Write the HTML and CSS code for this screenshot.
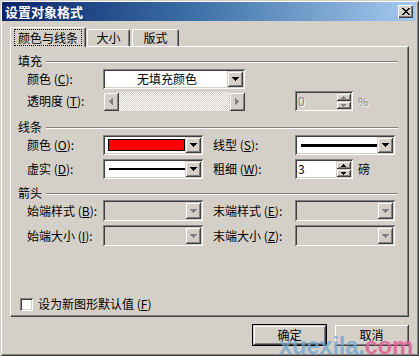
FILE: index.html
```html
<!DOCTYPE html>
<html lang="zh-CN">
<head>
<meta charset="utf-8">
<title>设置对象格式</title>
<link rel="stylesheet" href="styles.css">
</head>
<body>
<div class="window">
  <div class="titlebar">
    <span class="title">设置对象格式</span>
    <span class="close"><svg width="8" height="7" viewBox="0 0 8 7"><path d="M0 0h2v1h1v1h2V1h1V0h2v1H7v1H6v1H5v1h1v1h1v1h1v1H6V6H5V5H3v1H2v1H0V6h1V5h1V4h1V3H2V2H1V1H0z" fill="#000"/></svg></span>
  </div>

  <div class="tabs">
    <div class="tab active"><span class="focus">颜色与线条</span></div>
    <div class="tab t2">大小</div>
    <div class="tab t3">版式</div>
  </div>

  <div class="panel">
    <div class="group">
      <div class="ghead"><span>填充</span><i class="etch"></i></div>
      <div class="rows rows-fill">
        <div class="row">
          <span class="lbl">颜色 (<u>C</u>):</span>
          <div class="combo wide sunken">
            <div class="field center">无填充颜色</div>
            <div class="ddbtn raised"><svg width="7" height="4" viewBox="0 0 7 4"><path d="M0 0h7v1H6v1H5v1H4v1H3V3H2V2H1V1H0z" fill="#000"/></svg></div>
          </div>
        </div>
        <div class="row">
          <span class="lbl">透明度 (<u>T</u>):</span>
          <div class="scroll wide">
            <div class="sbtn raised"><svg width="4" height="7" viewBox="0 0 4 7"><path d="M3 0h1v7H3V6H2V5H1V4H0V3h1V2h1V1h1z" fill="#808080"/></svg></div>
            <div class="track"></div>
            <div class="sbtn raised"><svg width="4" height="7" viewBox="0 0 4 7"><path d="M0 0h1v1h1v1h1v1h1v1H3v1H2v1H1v1H0z" fill="#808080"/></svg></div>
          </div>
          <div class="spin sunken disabled">
            <div class="field">0</div>
            <div class="spinbtns">
              <div class="sp raised"><svg width="5" height="3" viewBox="0 0 5 3"><path d="M2 0h1v1h1v1h1v1H0V2h1V1h1z" fill="#808080"/></svg></div>
              <div class="sp raised"><svg width="5" height="3" viewBox="0 0 5 3"><path d="M0 0h5v1H4v1H3v1H2V2H1V1H0z" fill="#808080"/></svg></div>
            </div>
          </div>
          <span class="unit gray">%</span>
        </div>
      </div>
    </div>

    <div class="group g-line">
      <div class="ghead"><span>线条</span><i class="etch"></i></div>
      <div class="rows rows-line">
        <div class="row">
          <span class="lbl">颜色 (<u>O</u>):</span>
          <div class="combo narrow sunken">
            <div class="field"><i class="swatch"></i></div>
            <div class="ddbtn raised"><svg width="7" height="4" viewBox="0 0 7 4"><path d="M0 0h7v1H6v1H5v1H4v1H3V3H2V2H1V1H0z" fill="#000"/></svg></div>
          </div>
          <span class="lbl2">线型 (<u>S</u>):</span>
          <div class="combo narrow sunken">
            <div class="field"><i class="stroke thick"></i></div>
            <div class="ddbtn raised"><svg width="7" height="4" viewBox="0 0 7 4"><path d="M0 0h7v1H6v1H5v1H4v1H3V3H2V2H1V1H0z" fill="#000"/></svg></div>
          </div>
        </div>
        <div class="row">
          <span class="lbl">虚实 (<u>D</u>):</span>
          <div class="combo narrow sunken">
            <div class="field"><i class="stroke"></i></div>
            <div class="ddbtn raised"><svg width="7" height="4" viewBox="0 0 7 4"><path d="M0 0h7v1H6v1H5v1H4v1H3V3H2V2H1V1H0z" fill="#000"/></svg></div>
          </div>
          <span class="lbl2">粗细 (<u>W</u>):</span>
          <div class="spin sunken">
            <div class="field">3</div>
            <div class="spinbtns">
              <div class="sp raised"><svg width="5" height="3" viewBox="0 0 5 3"><path d="M2 0h1v1h1v1h1v1H0V2h1V1h1z" fill="#000"/></svg></div>
              <div class="sp raised"><svg width="5" height="3" viewBox="0 0 5 3"><path d="M0 0h5v1H4v1H3v1H2V2H1V1H0z" fill="#000"/></svg></div>
            </div>
          </div>
          <span class="unit">磅</span>
        </div>
      </div>
    </div>

    <div class="group g-arrow">
      <div class="ghead"><span>箭头</span><i class="etch"></i></div>
      <div class="rows rows-arrow">
        <div class="row tall">
          <span class="lbl">始端样式 (<u>B</u>):</span>
          <div class="combo narrow sunken off">
            <div class="field"></div>
            <div class="ddbtn raised"><svg width="7" height="4" viewBox="0 0 7 4"><path d="M0 0h7v1H6v1H5v1H4v1H3V3H2V2H1V1H0z" fill="#808080"/></svg></div>
          </div>
          <span class="lbl2">末端样式 (<u>E</u>):</span>
          <div class="combo narrow sunken off">
            <div class="field"></div>
            <div class="ddbtn raised"><svg width="7" height="4" viewBox="0 0 7 4"><path d="M0 0h7v1H6v1H5v1H4v1H3V3H2V2H1V1H0z" fill="#808080"/></svg></div>
          </div>
        </div>
        <div class="row tall">
          <span class="lbl">始端大小 (<u>I</u>):</span>
          <div class="combo narrow sunken off">
            <div class="field"></div>
            <div class="ddbtn raised"><svg width="7" height="4" viewBox="0 0 7 4"><path d="M0 0h7v1H6v1H5v1H4v1H3V3H2V2H1V1H0z" fill="#808080"/></svg></div>
          </div>
          <span class="lbl2">末端大小 (<u>Z</u>):</span>
          <div class="combo narrow sunken off">
            <div class="field"></div>
            <div class="ddbtn raised"><svg width="7" height="4" viewBox="0 0 7 4"><path d="M0 0h7v1H6v1H5v1H4v1H3V3H2V2H1V1H0z" fill="#808080"/></svg></div>
          </div>
        </div>
      </div>
    </div>

    <div class="checkrow">
      <span class="checkbox sunken"></span>
      <span>设为新图形默认值 (<u>F</u>)</span>
    </div>
  </div>

  <div class="footer">
    <div class="btn default"><span class="raised inner">确定</span></div>
    <div class="btn"><span class="raised inner">取消</span></div>
  </div>

  <div class="watermark"><span class="wm1">xuexila.</span><span class="wm2">com</span></div>
</div>
</body>
</html>
```

FILE: styles.css
```css
* { box-sizing: border-box; }
html, body { margin: 0; padding: 0; background: #d4d0c8; }
body {
  font-family: "Noto Sans CJK SC", "Liberation Sans", sans-serif;
  font-size: 12px;
  line-height: 14px;
  color: #000;
}
u { text-decoration: underline; text-underline-offset: 1px; }

.window {
  position: relative;
  width: 419px;
  height: 356px;
  background: #d4d0c8;
  padding: 2px 2px 3px 2px;
  box-shadow: inset 1px 1px #d4d0c8, inset -1px -1px #404040, inset 2px 2px #fff, inset -2px -2px #808080;
  display: flex;
  flex-direction: column;
  overflow: hidden;
}

.sunken { box-shadow: inset 1px 1px #808080, inset -1px -1px #fff, inset 2px 2px #404040, inset -2px -2px #d4d0c8; }
.raised { box-shadow: inset 1px 1px #d4d0c8, inset -1px -1px #404040, inset 2px 2px #fff, inset -2px -2px #808080; }

.titlebar {
  height: 19px;
  margin: 0 1px 0 0;
  background: linear-gradient(to right, #0a246a 0%, #3a6ea5 45%, #a6caf0 100%);
  display: flex;
  align-items: center;
  justify-content: space-between;
  padding: 0 3px 0 3px;
}
.title {
  color: #fff;
  font-weight: bold;
  font-size: 13px;
  line-height: 15px;
}
.close {
  width: 15px;
  height: 13px;
  background: #d4d0c8;
  display: flex;
  align-items: center;
  justify-content: center;
  box-shadow: inset 1px 1px #fff, inset -1px -1px #404040, inset -2px -2px #808080;
}

.tabs {
  display: flex;
  align-items: flex-end;
  margin: 6px 0 0 8px;
  height: 19px;
}
.tab {
  height: 17px;
  display: flex;
  align-items: center;
  justify-content: center;
  border-top: 1px solid #fff;
  border-left: 1px solid #fff;
  border-right: 1px solid #404040;
  border-radius: 2px 2px 0 0;
  box-shadow: inset -1px 0 #808080;
  background: #d4d0c8;
}
.tab.active {
  position: relative;
  z-index: 1;
  width: 76px;
  height: 20px;
  margin-bottom: -1px;
  align-items: flex-start;
  padding-top: 2px;
}
.focus {
  outline: 1px dotted #000;
  outline-offset: 0;
  padding: 0 3px;
  line-height: 15px;
}
.tab.t2 { width: 43px; margin-left: 1px; }
.tab.t3 { width: 47px; margin-left: 2px; }

.panel {
  width: 399px;
  height: 271px;
  margin-left: 8px;
  border-top: 1px solid #fff;
  border-left: 1px solid #fff;
  border-right: 1px solid #404040;
  border-bottom: 1px solid #404040;
  box-shadow: inset -1px -1px #808080;
  padding: 7px 10px 5px 7px;
  display: flex;
  flex-direction: column;
}

.ghead {
  display: flex;
  align-items: center;
  height: 14px;
}
.etch {
  flex: 1;
  margin-left: 4px;
  margin-top: 1px;
  border-top: 1px solid #808080;
  border-bottom: 1px solid #fff;
}
.g-line { margin-top: 9px; }
.g-arrow { margin-top: 7px; }

.rows { display: flex; flex-direction: column; padding-left: 9px; }
.rows-fill { gap: 2px; margin-top: 1px; }
.rows-line { gap: 4px; margin-top: 1px; }
.rows-arrow { gap: 4px; margin-top: 0; }

.row { display: flex; align-items: center; height: 20px; }
.row.tall { height: 21px; }
.lbl { width: 76px; white-space: nowrap; }
.lbl2 { width: 82px; margin-left: 10px; white-space: nowrap; }

.combo {
  height: 100%;
  display: flex;
  padding: 2px;
  background: #fff;
}
.combo.wide { width: 142px; }
.combo.narrow { width: 100px; }
.combo.off { background: #d4d0c8; }
.field {
  flex: 1;
  display: flex;
  align-items: center;
  padding-left: 2px;
  overflow: hidden;
}
.field.center { justify-content: center; }
.ddbtn {
  width: 16px;
  height: 100%;
  background: #d4d0c8;
  display: flex;
  align-items: center;
  justify-content: center;
}
.swatch {
  display: block;
  width: 79px;
  height: 12px;
  margin-left: 1px;
  background: #ff0000;
  border: 1px solid #000;
}
.stroke {
  display: block;
  width: 80px;
  height: 2px;
  margin-left: 2px;
  background: #000;
}
.stroke.thick { height: 3px; width: 78px; }

.scroll {
  height: 19px;
  display: flex;
}
.scroll.wide { width: 142px; }
.sbtn {
  width: 16px;
  height: 100%;
  background: #d4d0c8;
  display: flex;
  align-items: center;
  justify-content: center;
}
.track {
  flex: 1;
  background: repeating-conic-gradient(#fff 0 25%, #d4d0c8 0 50%) 0 0 / 2px 2px;
}

.spin {
  width: 58px;
  height: 20px;
  margin-left: 50px;
  display: flex;
  padding: 2px;
  background: #fff;
}
.g-line .spin { margin-left: 0; }
.spin.disabled { background: #d4d0c8; }
.spin.disabled .field { color: #808080; text-shadow: 1px 1px #fff; }
.spin .field { padding-left: 1px; }
.spinbtns {
  width: 15px;
  display: flex;
  flex-direction: column;
}
.sp {
  flex: 1;
  background: #d4d0c8;
  display: flex;
  align-items: center;
  justify-content: center;
}
.unit { margin-left: 5px; }
.unit.gray { color: #808080; text-shadow: 1px 1px #fff; font-size: 11px; }

.checkrow {
  margin-top: auto;
  margin-left: 2px;
  display: flex;
  align-items: center;
  gap: 5px;
}
.checkbox {
  width: 13px;
  height: 13px;
  background: #fff;
}

.footer {
  display: flex;
  justify-content: flex-end;
  gap: 7px;
  margin-top: 7px;
  padding-right: 8px;
}
.btn {
  width: 75px;
  height: 22px;
  display: flex;
}
.btn .inner {
  flex: 1;
  display: flex;
  align-items: center;
  justify-content: center;
  background: #d4d0c8;
}
.btn.default { border: 1px solid #000; }

.watermark {
  position: absolute;
  right: 6px;
  bottom: 1px;
  font-family: "Liberation Sans", Arial, sans-serif;
  font-weight: bold;
  font-size: 24px;
  line-height: 19px;
  letter-spacing: -0.3px;
}
.wm1 { color: rgba(110, 165, 210, 0.75); }
.wm2 { color: rgba(225, 95, 150, 0.85); }
```
